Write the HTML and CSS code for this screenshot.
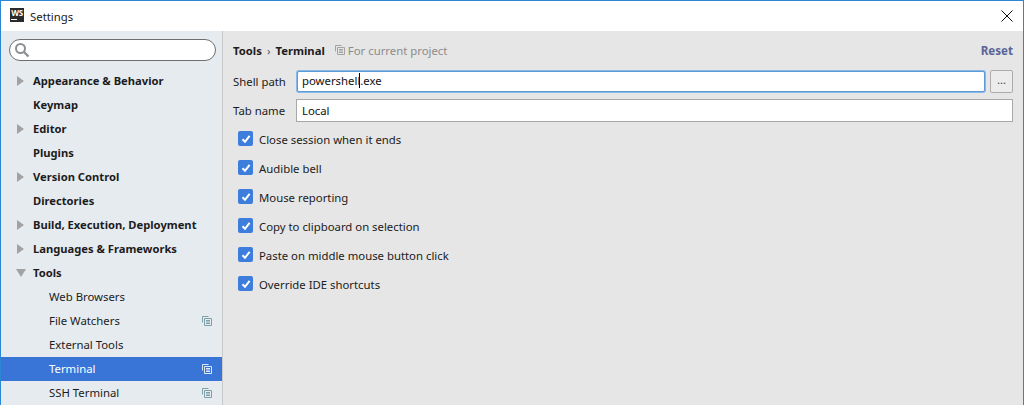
FILE: index.html
```html
<!DOCTYPE html>
<html lang="en">
<head>
    <meta charset="UTF-8">
    <title>Settings</title>
    <link rel="stylesheet" href="styles.css">
</head>
<body>
<div class="window">
    <div class="titlebar">
        <div class="app-logo"><span class="app-logo-text">WS</span><span class="app-logo-bar"></span></div>
        <span class="title">Settings</span>
        <svg class="close" width="14" height="14" viewBox="0 0 14 14"><path d="M1.5 1.5L12.5 12.5M12.5 1.5L1.5 12.5" stroke="#111" stroke-width="1" fill="none"/></svg>
    </div>
    <div class="main">
        <div class="sidebar">
            <div class="search">
                <svg width="16" height="16" viewBox="0 0 16 16"><circle cx="6.5" cy="6.5" r="4.5" stroke="#8a9094" stroke-width="2" fill="none"/><path d="M10 10L14.5 14.5" stroke="#8a9094" stroke-width="2.4" fill="none"/></svg>
            </div>
            <div class="tree">
                <div class="row top"><span class="arrow"></span>Appearance &amp; Behavior</div>
                <div class="row top">Keymap</div>
                <div class="row top"><span class="arrow"></span>Editor</div>
                <div class="row top">Plugins</div>
                <div class="row top"><span class="arrow"></span>Version Control</div>
                <div class="row top">Directories</div>
                <div class="row top"><span class="arrow"></span>Build, Execution, Deployment</div>
                <div class="row top"><span class="arrow"></span>Languages &amp; Frameworks</div>
                <div class="row top"><span class="arrow open"></span>Tools</div>
                <div class="row sub">Web Browsers</div>
                <div class="row sub">File Watchers
                    <svg class="copy" width="10" height="10" viewBox="0 0 10 10"><path d="M.5 6.5V.5H6.5M2.5 2.5H9.5V9.5H2.5ZM4 4.5H8M4 6H8M4 7.5H8" stroke="#7fa0a8" fill="none"/></svg>
                </div>
                <div class="row sub">External Tools</div>
                <div class="row sub selected">Terminal
                    <svg class="copy" width="10" height="10" viewBox="0 0 10 10"><path d="M.5 6.5V.5H6.5M2.5 2.5H9.5V9.5H2.5ZM4 4.5H8M4 6H8M4 7.5H8" stroke="#dfe8f5" fill="none"/></svg>
                </div>
                <div class="row sub">SSH Terminal
                    <svg class="copy" width="10" height="10" viewBox="0 0 10 10"><path d="M.5 6.5V.5H6.5M2.5 2.5H9.5V9.5H2.5ZM4 4.5H8M4 6H8M4 7.5H8" stroke="#7fa0a8" fill="none"/></svg>
                </div>
            </div>
        </div>
        <div class="content">
            <div class="crumbs">
                <b>Tools</b><span class="sep">›</span><b>Terminal</b>
                <svg class="crumb-icon" width="10" height="10" viewBox="0 0 10 10"><path d="M.5 6.5V.5H6.5M2.5 2.5H9.5V9.5H2.5ZM4 4.5H8M4 6H8M4 7.5H8" stroke="#a3a3a3" fill="none"/></svg>
                <span class="scope">For current project</span>
                <span class="reset">Reset</span>
            </div>
            <div class="field">
                <label>Shell path</label>
                <div class="input focused">powershell<span class="caret"></span>.exe</div>
                <div class="browse">...</div>
            </div>
            <div class="field second">
                <label>Tab name</label>
                <div class="input">Local</div>
            </div>
            <div class="checks">
                <div class="check"><span class="box"><svg width="10" height="10" viewBox="0 0 10 10"><path d="M1.5 5.2L4 7.8L8.6 1.8" stroke="#fff" stroke-width="2" fill="none"/></svg></span>Close session when it ends</div>
                <div class="check"><span class="box"><svg width="10" height="10" viewBox="0 0 10 10"><path d="M1.5 5.2L4 7.8L8.6 1.8" stroke="#fff" stroke-width="2" fill="none"/></svg></span>Audible bell</div>
                <div class="check"><span class="box"><svg width="10" height="10" viewBox="0 0 10 10"><path d="M1.5 5.2L4 7.8L8.6 1.8" stroke="#fff" stroke-width="2" fill="none"/></svg></span>Mouse reporting</div>
                <div class="check"><span class="box"><svg width="10" height="10" viewBox="0 0 10 10"><path d="M1.5 5.2L4 7.8L8.6 1.8" stroke="#fff" stroke-width="2" fill="none"/></svg></span>Copy to clipboard on selection</div>
                <div class="check"><span class="box"><svg width="10" height="10" viewBox="0 0 10 10"><path d="M1.5 5.2L4 7.8L8.6 1.8" stroke="#fff" stroke-width="2" fill="none"/></svg></span>Paste on middle mouse button click</div>
                <div class="check"><span class="box"><svg width="10" height="10" viewBox="0 0 10 10"><path d="M1.5 5.2L4 7.8L8.6 1.8" stroke="#fff" stroke-width="2" fill="none"/></svg></span>Override IDE shortcuts</div>
            </div>
        </div>
    </div>
</div>
</body>
</html>
```

FILE: styles.css
```css
* {
    box-sizing: border-box;
}

html, body {
    margin: 0;
    height: 100%;
    overflow: hidden;
}

body {
    font-family: "Noto Sans", "Open Sans", sans-serif;
    font-size: 11.35px;
    color: #1c1c1c;
}

b {
    font-size: 11.3px;
}

.window {
    height: 405px;
    display: flex;
    flex-direction: column;
    border-top: 1px solid #2b87d6;
    border-left: 1px solid #2b87d6;
    border-right: 1px solid #2b87d6;
    background-color: #e6e6e6;
}

.titlebar {
    height: 30px;
    flex: none;
    display: flex;
    align-items: center;
    background-color: #fff;
    padding-left: 9px;
    padding-right: 9px;
}

.app-logo {
    width: 14px;
    height: 14px;
    margin-bottom: 2px;
    background-color: #2b2b2b;
    display: flex;
    flex-direction: column;
    align-items: center;
    padding-top: 1px;
}

.app-logo-text {
    font-size: 8px;
    line-height: 8px;
    font-weight: 700;
    color: #fff;
    letter-spacing: -.3px;
}

.app-logo-bar {
    width: 6px;
    height: 1px;
    margin-top: 2px;
    margin-right: 6px;
    background-color: #fff;
}

.title {
    margin-left: 6px;
    color: #222;
}

.close {
    margin-left: auto;
}

.main {
    flex: 1;
    display: flex;
    min-height: 0;
}

.sidebar {
    width: 222px;
    flex: none;
    background-color: #e6ebf0;
    border-right: 1px solid #c9c9c9;
    padding-top: 8px;
}

.search {
    height: 22px;
    margin-left: 8px;
    margin-right: 6px;
    background-color: #fff;
    border: 1px solid #6f6f6f;
    border-radius: 11px;
    display: flex;
    align-items: center;
    padding-left: 4px;
}

.tree {
    margin-top: 8px;
}

.row {
    height: 24px;
    padding-bottom: 2px;
    display: flex;
    align-items: center;
    position: relative;
}

.top {
    padding-left: 32px;
    font-size: 11.2px;
    font-weight: 700;
}

.sub {
    padding-left: 48px;
}

.selected {
    background-color: #3875d7;
    color: #fff;
}

.arrow {
    position: absolute;
    left: 16px;
    top: 7px;
    width: 0;
    height: 0;
    border-top: 5px solid transparent;
    border-bottom: 5px solid transparent;
    border-left: 7px solid #a2a2a2;
}

.arrow.open {
    left: 15px;
    top: 8px;
    border-left: 5px solid transparent;
    border-right: 5px solid transparent;
    border-top: 8px solid #a2a2a2;
    border-bottom: 0;
}

.copy {
    margin-left: auto;
    margin-right: 10px;
    margin-top: 2px;
}

.content {
    flex: 1;
    min-width: 0;
    padding: 10px 10px 0;
}

.crumbs {
    height: 20px;
    padding-bottom: 2px;
    display: flex;
    align-items: center;
}

.sep {
    margin: 0 5px;
    color: #555;
}

.crumb-icon {
    margin-left: 10px;
    margin-right: 3px;
}

.scope {
    color: #8c8c8c;
}

.reset {
    margin-left: auto;
    font-size: 11.6px;
    font-weight: 700;
    color: #5a6496;
}

.field {
    margin-top: 9px;
    height: 23px;
    display: flex;
    align-items: center;
}

.field.second {
    margin-top: 6px;
}

.field label {
    width: 63px;
    flex: none;
}

.input {
    flex: 1;
    height: 23px;
    background-color: #fff;
    border: 1px solid #a8a8a8;
    display: flex;
    align-items: center;
    padding-left: 5px;
    color: #111;
}

.input.focused {
    height: 21px;
    margin-left: 1px;
    padding-left: 4px;
    padding-bottom: 2px;
    border: 1px solid #5b9bd8;
    box-shadow: 0 0 0 1px #8ab8e6;
    border-radius: 2px;
}

.caret {
    width: 1px;
    height: 15px;
    margin-left: -1px;
    background-color: #000;
}

.browse {
    width: 23px;
    height: 23px;
    margin-left: 5px;
    flex: none;
    border: 1px solid #acacac;
    border-radius: 2px;
    background-color: #ececec;
    text-align: center;
    line-height: 17px;
    color: #444;
}

.checks {
    margin-top: 3px;
}

.check {
    height: 29px;
    display: flex;
    align-items: center;
    padding-left: 5px;
}

.box {
    width: 15px;
    height: 15px;
    margin-right: 6px;
    margin-bottom: 2px;
    flex: none;
    border-radius: 2px;
    background-color: #3d7ddb;
    display: flex;
    align-items: center;
    justify-content: center;
}
```
